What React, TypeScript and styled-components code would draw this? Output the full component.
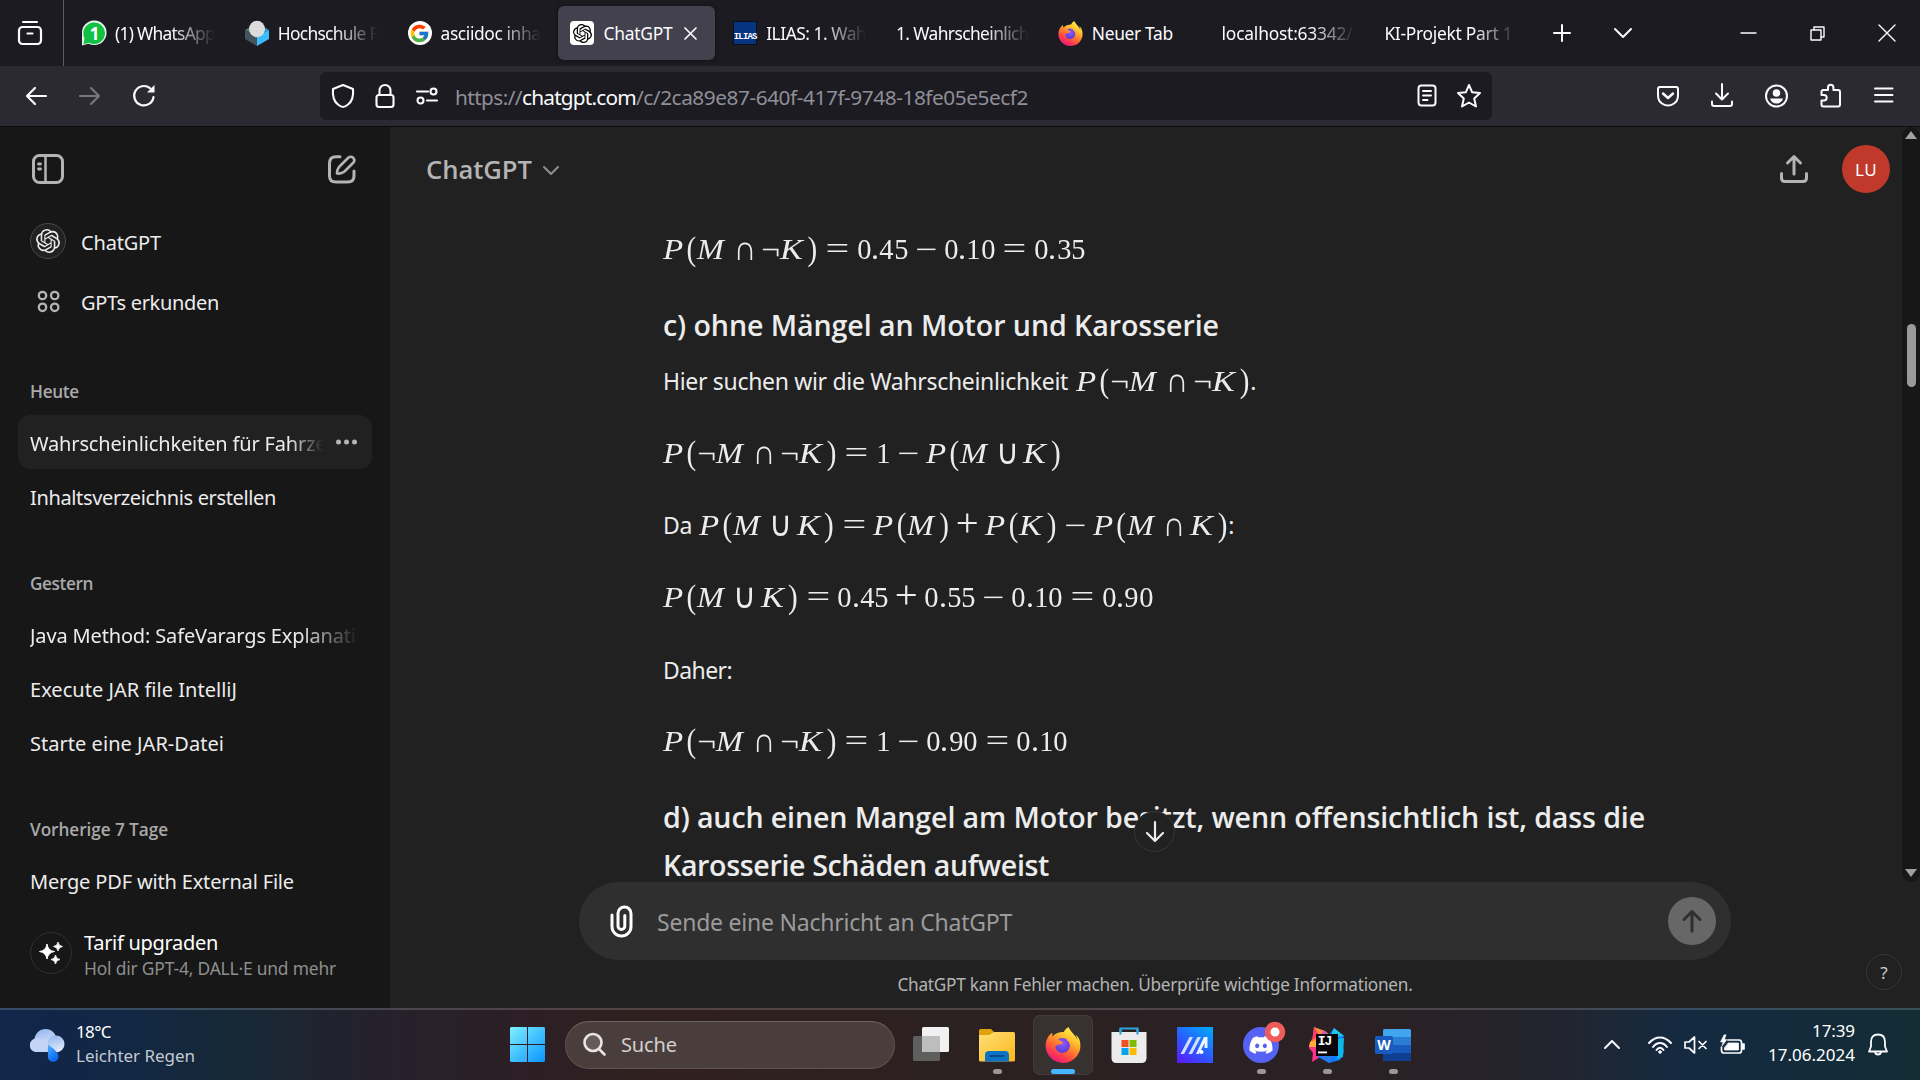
import React, { useLayoutEffect, useRef, useState } from 'react';
import styled, { createGlobalStyle, css } from 'styled-components';
import { SiOpenai, SiDiscord, SiFirefoxbrowser } from 'react-icons/si';
import { FcGoogle } from 'react-icons/fc';

const Global = createGlobalStyle`
  * { box-sizing: border-box; }
  html, body { margin: 0; background: #212121; overflow: hidden; }
  body { font-family: "Noto Sans", "Open Sans", sans-serif; color: #ececec; }
  svg { display: block; flex: none; overflow: visible; }
`;

/* ---------- text with an optional target width ---------- */

const FitText = styled.span`
  white-space: nowrap;
  display: inline-block;
`;

function Fit({ w, children }: { w: number; children: string }) {
  const ref = useRef<HTMLSpanElement>(null);
  const [spacing, setSpacing] = useState(0);
  useLayoutEffect(() => {
    if (ref.current) {
      const natural = ref.current.getBoundingClientRect().width;
      setSpacing((w - natural) / children.length);
    }
  }, [w, children]);
  return (
    <FitText ref={ref} style={{ letterSpacing: spacing }}>
      {children}
    </FitText>
  );
}

/* ---------- window ---------- */

const Screen = styled.div`
  width: 1920px;
  height: 1080px;
  display: flex;
  flex-direction: column;
  overflow: hidden;
`;

const TabBar = styled.div`
  height: 66px;
  flex: none;
  background: #1c1b22;
  display: flex;
  align-items: center;
`;

const TabOverview = styled.div`
  width: 64px;
  height: 66px;
  border-right: 1px solid #5b5b66;
  display: flex;
  align-items: center;
  padding-left: 18px;
  margin-right: 6px;
`;

const Tab = styled.div<{ $active?: boolean }>`
  width: 157px;
  height: 54px;
  margin-right: 5.8px;
  padding: 0 12px;
  display: flex;
  align-items: center;
  gap: 9px;
  border-radius: 6px;
  font-size: 17.4px;
  color: #fbfbfe;
  ${(p) => p.$active && css`
    background: #42414d;
    box-shadow: 0 0 4px rgba(0, 0, 0, 0.5);
  `}
`;

const TabLabel = styled.div<{ $fade?: boolean }>`
  flex: 1;
  min-width: 0;
  overflow: hidden;
  white-space: nowrap;
  line-height: 28px;
  ${(p) => p.$fade && css`
    mask-image: linear-gradient(to left, transparent, #000 44px);
  `}
`;

const Favicon = styled.div<{ $bg?: string }>`
  width: 24px;
  height: 24px;
  flex: none;
  border-radius: ${(p) => (p.$bg === '#fff' ? '4px' : '0')};
  background: ${(p) => p.$bg ?? 'transparent'};
  color: #000;
  display: flex;
  align-items: center;
  justify-content: center;
`;

const RoundFavicon = styled(Favicon)`
  border-radius: 50%;
`;

const IliasIcon = styled(Favicon)`
  border: 1px solid #06101f;
  align-items: flex-end;
  font: bold 9px/13px "Liberation Mono", monospace;
  letter-spacing: -0.8px;
  color: #fff;
`;

const BarIcons = styled.div<{ $left: number; $gap: number }>`
  display: flex;
  align-items: center;
  margin-left: ${(p) => p.$left}px;
  gap: ${(p) => p.$gap}px;
`;

const NavBar = styled.div`
  height: 61px;
  flex: none;
  background: #2b2a33;
  border-bottom: 1px solid #0c0c0d;
  display: flex;
  align-items: center;
  padding-left: 24px;
`;

const UrlBar = styled.div`
  width: 1172px;
  height: 48px;
  margin-left: 164px;
  border-radius: 6px;
  background: #1c1b22;
  display: flex;
  align-items: center;
  padding: 0 11px;
`;

const Url = styled.div`
  margin-left: 16px;
  flex: 1;
  font-size: 20.8px;
  line-height: 30px;
  color: #8f8f98;
  padding-top: 2px;
  b { font-weight: 400; color: #fbfbfe; }
`;

/* ---------- page ---------- */

const Page = styled.div`
  height: 881px;
  flex: none;
  display: flex;
`;

const Sidebar = styled.aside`
  width: 390px;
  flex: none;
  background: #171717;
  padding: 0 18px;
  display: flex;
  flex-direction: column;
`;

const SideHead = styled.div`
  height: 84px;
  display: flex;
  align-items: center;
  justify-content: space-between;
  padding: 0 16px 0 14px;
  color: #b4b4b4;
`;

const SideLink = styled.div`
  height: 60px;
  display: flex;
  align-items: center;
  gap: 15px;
  padding: 2px 12px 0;
  font-size: 20px;
`;

const LinkIcon = styled.div<{ $ring?: boolean }>`
  width: 36px;
  height: 36px;
  margin-bottom: 3px;
  border-radius: 50%;
  display: flex;
  align-items: center;
  justify-content: center;
  color: ${(p) => (p.$ring ? '#ececec' : '#b4b4b4')};
  ${(p) => p.$ring && css`
    background: #212121;
    border: 1.5px solid #4a4a4a;
  `}
`;

const GroupTitle = styled.h3<{ $top: number }>`
  margin: ${(p) => p.$top}px 0 8px;
  padding-left: 12px;
  height: 30px;
  font-size: 17.2px;
  line-height: 30px;
  font-weight: 600;
  font-family: "Open Sans", "Noto Sans", sans-serif;
  color: #a9a9a9;
`;

const Chat = styled.div<{ $active?: boolean }>`
  height: 54px;
  flex: none;
  border-radius: 12px;
  padding: 2px 13px 0 12px;
  display: flex;
  align-items: center;
  justify-content: space-between;
  font-size: 20px;
  background: ${(p) => (p.$active ? '#212121' : 'transparent')};
`;

const ChatTitle = styled.div<{ $width?: number }>`
  overflow: hidden;
  white-space: nowrap;
  ${(p) => p.$width && css`
    width: ${p.$width}px;
    mask-image: linear-gradient(to left, transparent, #000 ${p.$width > 300 ? 60 : 34}px);
  `}
`;

const Upgrade = styled.div`
  display: flex;
  align-items: center;
  gap: 12px;
  height: 60px;
  margin-top: 16px;
  padding-left: 12px;
`;

const UpgradeIcon = styled.div`
  width: 42px;
  height: 42px;
  border: 1px solid #2f2f2f;
  border-radius: 50%;
  display: flex;
  align-items: center;
  justify-content: center;
`;

const UpgradeText = styled.div`
  display: flex;
  flex-direction: column;
  align-items: flex-start;
  font-size: 20px;
  line-height: 27px;
  padding-top: 3px;
  color: #fff;
  small { font-size: 17.4px; line-height: 25px; color: #8e8e8e; }
`;

const Main = styled.main`
  flex: 1;
  background: #212121;
  display: flex;
  flex-direction: column;
  position: relative;
`;

const Scroller = styled.div`
  height: 755px;
  flex: none;
  display: flex;
`;

const Conversation = styled.div`
  flex: 1;
  overflow: hidden;
`;

const ScrollTrack = styled.div`
  width: 18px;
  background: #171717;
  border-radius: 9px;
  display: flex;
  flex-direction: column;
  align-items: center;
  padding: 4px 0 5px;
`;

const Thumb = styled.div`
  width: 9px;
  height: 63px;
  margin-top: 185px;
  margin-bottom: auto;
  border-radius: 5px;
  background: #9a9a9a;
`;

const MainHead = styled.header`
  height: 84px;
  display: flex;
  align-items: center;
  padding: 0 12px 0 36px;
  color: #b4b4b4;
`;

const Model = styled.div`
  display: flex;
  align-items: center;
  gap: 11px;
  margin-right: auto;
  font: 600 25.6px/40px "Open Sans", "Noto Sans", sans-serif;
  padding-top: 2px;
`;

const Avatar = styled.div`
  width: 48px;
  height: 48px;
  border-radius: 50%;
  margin-left: 34px;
  background: #c0392b;
  color: #fff;
  font-size: 17px;
  display: flex;
  align-items: center;
  justify-content: center;
`;

const Answer = styled.article`
  padding-left: 273px;
`;

const Line = styled.div<{ $h: number; $gap?: number }>`
  height: ${(p) => p.$h}px;
  display: flex;
  align-items: center;
  font-size: 23px;
  > :first-child { margin-right: ${(p) => p.$gap ?? 0}px; }
`;

const Heading = styled.h3<{ $h?: number }>`
  margin: 0;
  height: ${(p) => p.$h ?? 96}px;
  display: flex;
  flex-direction: column;
  justify-content: center;
  align-items: flex-start;
  font: 600 28.6px/48px "Open Sans", "Noto Sans", sans-serif;
`;

const Composer = styled.div`
  width: 1152px;
  height: 78px;
  flex: none;
  margin-left: 189px;
  border-radius: 39px;
  background: #2f2f2f;
  display: flex;
  align-items: center;
  padding: 0 15px 0 28px;
`;

const Placeholder = styled.div`
  flex: 1;
  margin-left: 20px;
  font-size: 23px;
  padding-top: 2px;
  color: #9b9b9b;
`;

const SendButton = styled.div`
  width: 48px;
  height: 48px;
  border-radius: 50%;
  background: #676767;
  display: flex;
  align-items: center;
  justify-content: center;
`;

const Disclaimer = styled.div`
  height: 48px;
  width: 1530px;
  padding-top: 1px;
  text-align: center;
  font-size: 17.2px;
  line-height: 48px;
  color: #b4b4b4;
`;

const RoundButton = styled.div<{ $x: number; $y: number; $size: number }>`
  position: absolute;
  left: ${(p) => p.$x}px;
  top: ${(p) => p.$y}px;
  width: ${(p) => p.$size}px;
  height: ${(p) => p.$size}px;
  border-radius: 50%;
  border: 1.5px solid #383838;
  background: #212121;
  display: flex;
  align-items: center;
  justify-content: center;
  font-size: 17px;
  color: #cfcfcf;
`;

/* ---------- formulas ---------- */

const Formula = styled.span`
  display: inline-flex;
  align-items: baseline;
  font: 29.04px/36px "Liberation Serif", serif;
`;

const Glyph = styled.span<{ $w: number; $pad: number; $kind: string; $sx: number; $sy: number }>`
  display: flex;
  justify-content: ${(p) => (p.$kind === 'var' ? 'flex-start' : 'center')};
  width: ${(p) => p.$w}em;
  margin: 0 ${(p) => p.$pad}em;
  font-style: ${(p) => (p.$kind === 'var' ? 'italic' : 'normal')};
  transform-origin: ${(p) => (p.$kind === 'var' ? 'left' : 'center')} 66%;
  transform: scale(${(p) => p.$sx}, ${(p) => p.$sy});
  ${(p) => p.$kind === 'set' && css`
    font-family: "DejaVu Sans", sans-serif;
    font-weight: 200;
  `}
`;

type Metric = [width: number, pad: number, kind: string, scaleX: number, scaleY: number];

const METRICS: Record<string, Metric> = {
  P: [0.781, 0, 'var', 1.14, 1.04],
  M: [1.079, 0, 'var', 1.11, 1.04],
  K: [0.921, 0, 'var', 1.18, 1.04],
  '(': [0.389, 0, 'paren', 1, 1.13],
  ')': [0.389, 0, 'paren', 1, 1.13],
  '¬': [0.667, 0, 'op', 1.15, 1.05],
  '∩': [0.667, 0.222, 'set', 1.08, 1.2],
  '∪': [0.667, 0.222, 'set', 1.08, 1.2],
  '+': [0.778, 0.222, 'op', 1.4, 1.35],
  '−': [0.778, 0.222, 'op', 1.35, 1],
  '=': [0.778, 0.278, 'op', 1.45, 1.1],
  '.': [0.278, 0, 'op', 1.1, 1.1],
};

function MathText({ children }: { children: string }) {
  return (
    <Formula>
      {[...children].map((c, i) => {
        const [w, pad, kind, sx, sy] = METRICS[c] ?? [0.5, 0, 'num', 0.98, 1.03];
        return (
          <Glyph key={i} $w={w} $pad={pad} $kind={kind} $sx={sx} $sy={sy}>
            <span>{c}</span>
          </Glyph>
        );
      })}
    </Formula>
  );
}

/* ---------- taskbar ---------- */

const Taskbar = styled.footer`
  height: 72px;
  flex: none;
  border-top: 2px solid rgba(255, 255, 255, 0.17);
  background: linear-gradient(90deg, #11264a 0, #122743 130px, #162937 230px, #20232f 320px,
    #28202b 420px, #2c1f25 520px, #30201e 680px, #2c211f 850px, #2b2123 1100px, #2a2125 1400px,
    #212530 1570px, #142a40 1680px, #132b3c 1780px, #142c34 1920px) border-box;
  display: flex;
  align-items: center;
`;

const Weather = styled.div`
  display: flex;
  align-items: center;
  gap: 11px;
  padding-left: 28px;
  width: 502px;
`;

const TwoLines = styled.div<{ $right?: boolean }>`
  display: flex;
  flex-direction: column;
  margin-top: -3px;
  align-items: ${(p) => (p.$right ? 'flex-end' : 'flex-start')};
  font-size: 17px;
  line-height: 24px;
  color: #fff;
  span:last-child { color: ${(p) => (p.$right ? '#fff' : '#c3c9d2')}; }
`;

const SearchBox = styled.div`
  width: 330px;
  height: 48px;
  margin: 0 10px 0 12px;
  border-radius: 24px;
  border: 1.5px solid #5f5351;
  border-top-color: #6f6361;
  background: #4a3e3d;
  display: flex;
  align-items: center;
  gap: 15px;
  padding: 0 0 2px 17px;
  font-size: 20px;
  color: #d3cfcd;
`;

const AppSlot = styled.div<{ $active?: boolean }>`
  width: 60px;
  height: 60px;
  margin: 0 3px;
  padding-top: 12px;
  border-radius: 7px;
  display: flex;
  flex-direction: column;
  align-items: center;
  ${(p) => p.$active && css`
    background: #373130;
    box-shadow: inset 0 0 0 1px #413b3a;
  `}
`;

const Indicator = styled.i<{ $wide?: boolean }>`
  display: block;
  width: ${(p) => (p.$wide ? 24 : 9)}px;
  height: 5px;
  margin-top: 6px;
  border-radius: 3px;
  background: ${(p) => (p.$wide ? '#45b6fe' : '#9b9796')};
`;

const StartSlot = styled(AppSlot)`
  margin: 0;
  width: 51px;
`;

const DiscordWrap = styled.div`
  margin: -6px -6px 0 0;
`;

const Tray = styled.div`
  display: flex;
  align-items: center;
  margin-left: 178px;
  padding-bottom: 1px;
  color: #fff;
`;

const TrayItem = styled.div<{ $left: number }>`
  margin-left: ${(p) => p.$left}px;
`;

/* ---------- drawings ---------- */

type StrokeProps = {
  w?: number;
  h?: number;
  s?: number;
  color?: string;
  children: React.ReactNode;
};

const Stroke = ({ w = 24, h = w, s = 2, color = '#fbfbfe', children }: StrokeProps) => (
  <svg width={w} height={h} viewBox={`0 0 ${w} ${h}`} fill="none" stroke={color}
    strokeWidth={s} strokeLinecap="round" strokeLinejoin="round">
    {children}
  </svg>
);

const Firefox = ({ size, id }: { size: number; id: string }) => (
  <svg width={size} height={size} viewBox="0 0 24 24">
    <defs>
      <linearGradient id={`${id}f`} gradientUnits="userSpaceOnUse" x1="20" y1="1" x2="7" y2="24">
        <stop offset="0" stopColor="#fff44f" />
        <stop offset="0.3" stopColor="#ffc22e" />
        <stop offset="0.55" stopColor="#ff7a2e" />
        <stop offset="0.8" stopColor="#ff3750" />
        <stop offset="1" stopColor="#e31587" />
      </linearGradient>
      <radialGradient id={`${id}p`} cx="0.5" cy="0.35" r="0.6">
        <stop offset="0" stopColor="#9059ff" />
        <stop offset="1" stopColor="#5b3fd6" />
      </radialGradient>
    </defs>
    <circle cx="12" cy="13" r="9.6" fill={`url(#${id}f)`} />
    <circle cx="11.6" cy="12.3" r="5" fill={`url(#${id}p)`} />
    <SiFirefoxbrowser size={24} fill={`url(#${id}f)`} />
  </svg>
);

const WhatsApp = () => (
  <svg width="25" height="25" viewBox="0 0 25 25">
    <path d="M0 24.5V12.5A12.3 12.3 0 1 1 12.5 24Q9 24 6.500 22.800Z" fill="#e8f5ea" />
    <path d="M1.500 23.200l1-6A10.800 10.800 0 1 1 7 21.800Z" fill="#12c143" />
    <text x="12.500" y="18.600" textAnchor="middle" fontSize="17" fontWeight="700" fill="#fff"
      fontFamily="Noto Sans, sans-serif">1</text>
  </svg>
);

const Hochschule = () => (
  <svg width="24" height="25" viewBox="0 0 24 25">
    <path d="M0 9L12 15V25L0 18Z" fill="#44545c" />
    <path d="M24 9L12 15V25L24 18Z" fill="#3cbcfc" />
    <path d="M0 9L5 6L12 15Z" fill="#5d7078" />
    <path d="M24 9L19 6L12 15Z" fill="#2a9fe0" />
    <ellipse cx="12" cy="8" rx="8" ry="8.200" fill="#dcdcdc" />
  </svg>
);

const Cloud = () => (
  <svg width="37" height="33" viewBox="0 0 37 33">
    <defs>
      <linearGradient id="cl" x1="0" y1="0" x2="0.3" y2="1">
        <stop offset="0" stopColor="#8fb2ee" />
        <stop offset="1" stopColor="#dfe9fb" />
      </linearGradient>
      <linearGradient id="dr" x1="0" y1="0" x2="0.5" y2="1">
        <stop offset="0" stopColor="#4fb0ff" />
        <stop offset="1" stopColor="#0a66f0" />
      </linearGradient>
    </defs>
    <circle cx="17.500" cy="11" r="11" fill="url(#cl)" />
    <path d="M7 9.500a7 7 0 0 0 0 13.500h13V16Q14 8 7 9.500Z" fill="#c3d5f6" />
    <circle cx="28" cy="15" r="8.500" fill="url(#cl)" />
    <path d="M20 15.500Q31 23 30.500 27.500a5.300 5.300 0 0 1-10.600 0Z" fill="url(#dr)" />
  </svg>
);

const WindowsLogo = () => (
  <svg width="35" height="35" viewBox="0 0 35 35">
    <defs>
      <linearGradient id="win" x1="0" y1="0" x2="35" y2="35" gradientUnits="userSpaceOnUse">
        <stop offset="0" stopColor="#7ef0ff" />
        <stop offset="1" stopColor="#0a94ff" />
      </linearGradient>
    </defs>
    <path d="M1 0H17V17H0V1ZM18 0H34L35 1V17H18ZM0 18H17V35H1L0 34ZM18 18H35V34L34 35H18Z" fill="url(#win)" />
  </svg>
);

const TaskView = () => (
  <svg width="36" height="34" viewBox="0 0 36 34">
    <rect x="9" y="0" width="27" height="25" rx="1.500" fill="#f1f1f1" />
    <rect x="0" y="9" width="27" height="25" rx="1.500" fill="#5e5e5e" />
    <rect x="9" y="9" width="18" height="16" fill="#bdbdbd" />
  </svg>
);

const Explorer = () => (
  <svg width="36" height="36" viewBox="0 0 36 36">
    <defs>
      <linearGradient id="fo" x1="0" y1="0" x2="1" y2="1">
        <stop offset="0" stopColor="#ffdf7a" />
        <stop offset="1" stopColor="#fbb917" />
      </linearGradient>
    </defs>
    <path d="M0 3.500Q0 2 1.500 2H12L15 5L12 9H0Z" fill="#e0a10b" />
    <path d="M0 8H10L15 5H34.500Q36 5 36 6.500V33Q36 34.500 34.500 34.500H1.500Q0 34.500 0 33Z" fill="url(#fo)" />
    <path d="M6 34.500V28Q6 24 10 24H26Q30 24 30 28V34.500Z" fill="#0c72c4" />
    <path d="M11.500 29H24.500" stroke="#0a4a86" strokeWidth="2" strokeLinecap="round" />
  </svg>
);

const Store = () => (
  <svg width="36" height="36" viewBox="0 0 36 36">
    <path d="M9.500 7.500V1.500H26.500V7.500" fill="none" stroke="#2ba4dd" strokeWidth="2.200" />
    <path d="M.5 5H35.500V31Q35.500 36 30.500 36H5.500Q.5 36 .5 31Z" fill="#ececec" />
    <path d="M9.500 7.500V2M26.500 7.500V2" stroke="#2ba4dd" strokeWidth="2.200" />
    <rect x="10.500" y="13" width="7" height="7" fill="#f25022" />
    <rect x="18.500" y="13" width="7" height="7" fill="#7fba00" />
    <rect x="10.500" y="21" width="7" height="7" fill="#00a4ef" />
    <rect x="18.500" y="21" width="7" height="7" fill="#ffb900" />
  </svg>
);

const Armoury = () => (
  <svg width="36" height="36" viewBox="0 0 36 36">
    <defs>
      <linearGradient id="ar" x1="0.1" y1="1" x2="0.8" y2="0">
        <stop offset="0" stopColor="#5a1cff" />
        <stop offset="0.5" stopColor="#2b5dff" />
        <stop offset="1" stopColor="#04a2fb" />
      </linearGradient>
    </defs>
    <rect width="36" height="36" fill="url(#ar)" />
    <path d="M3.500 27L12.500 10H16L7 27ZM11.500 27L20.500 10H24L15 27Z" fill="#cfe0ff" />
    <path d="M19 27L27 10H30.500V21H27.500V16L22 27Z" fill="#eef4ff" />
    <circle cx="24.500" cy="25" r="2" fill="#fff" />
  </svg>
);

const Discord = () => (
  <svg width="42" height="42" viewBox="0 0 42 42">
    <circle cx="18" cy="24" r="18" fill="#5662f3" />
    <svg x="6.500" y="12.500" width="23" height="23" viewBox="0 0 24 24">
      <SiDiscord size={24} color="#fff" />
    </svg>
    <circle cx="32" cy="11" r="10.300" fill="#f05b5b" />
    <circle cx="32" cy="11" r="4.500" fill="#fff" />
  </svg>
);

const IntelliJ = () => (
  <svg width="36" height="36" viewBox="0 0 36 36">
    <path d="M5 0L16 4L22 9L9 20L1 16L4 10Z" fill="#fc8a3c" />
    <path d="M5 0L10 8L3 14Z" fill="#fe3a6c" />
    <path d="M14 3L20 8L12 9Z" fill="#c55ccc" />
    <path d="M1 15L9 14L11 30L3 35L4 26L0 21Z" fill="#ff318c" />
    <path d="M1 15L8 13L7 20L0 20Z" fill="#ffb03a" />
    <path d="M25 1L35 9L33 15L35 25L31 33L20 36L9 30L20 8Z" fill="#087cfa" />
    <path d="M25 1L35 9L29 10L22 8Z" fill="#22c4e8" />
    <path d="M29 12L35 11L34 30L28 32Z" fill="#0fb7e6" />
    <path d="M20 36L11 29H24Z" fill="#2c7be8" />
    <rect x="7" y="7" width="22" height="22" fill="#0a0608" />
    <text x="8.800" y="18" fontSize="13" fontWeight="700" fill="#fff" letterSpacing="-1"
      fontFamily="Liberation Mono, monospace">IJ</text>
    <rect x="9" y="24.500" width="9" height="1.800" fill="#fff" />
  </svg>
);

const Word = () => (
  <svg width="36" height="36" viewBox="0 0 36 36">
    <rect x="8" y="2" width="28" height="32" rx="2" fill="#2b7cd3" />
    <path d="M8 10V4Q8 2 10 2H34Q36 2 36 4V10Z" fill="#41a5ee" />
    <path d="M8 18H36V26H8Z" fill="#185abd" />
    <path d="M8 26H36V32Q36 34 34 34H10Q8 34 8 32Z" fill="#103f91" />
    <rect x="0" y="9" width="18" height="18" rx="1.500" fill="#185abd" />
    <text x="9" y="23" textAnchor="middle" fontSize="14" fontWeight="700" fill="#fff"
      fontFamily="Noto Sans, sans-serif">W</text>
  </svg>
);

const Restore = () => (
  <Stroke w={15} h={15} s={1.4}>
    <rect x="1" y="4" width="10" height="10" />
    <path d="M4 4V1H14V11H11" />
  </Stroke>
);

/* ---------- screen parts ---------- */

function Tabs() {
  return (
    <TabBar>
      <TabOverview>
        <Stroke w={24} h={24} s={2.2}>
          <path d="M5 1H19" />
          <rect x="1" y="6" width="22" height="17" rx="3.500" />
          <path d="M9.500 12.500H14.500" />
        </Stroke>
      </TabOverview>
      <Tab>
        <Favicon><WhatsApp /></Favicon>
        <TabLabel $fade><Fit w={100}>(1) WhatsApp</Fit></TabLabel>
      </Tab>
      <Tab>
        <Favicon><Hochschule /></Favicon>
        <TabLabel $fade><Fit w={100}>Hochschule F</Fit></TabLabel>
      </Tab>
      <Tab>
        <RoundFavicon $bg="#fff"><FcGoogle size={21} /></RoundFavicon>
        <TabLabel $fade><Fit w={100}>asciidoc inha</Fit></TabLabel>
      </Tab>
      <Tab $active>
        <Favicon $bg="#fff"><SiOpenai size={19} /></Favicon>
        <TabLabel><Fit w={69}>ChatGPT</Fit></TabLabel>
        <Stroke w={13} s={1.7}><path d="M1 1L12 12M12 1L1 12" /></Stroke>
        <BarIcons $left={-3} $gap={0} />
      </Tab>
      <Tab>
        <IliasIcon $bg="#07347f">ILIAS</IliasIcon>
        <TabLabel $fade><Fit w={100}>ILIAS: 1. Wah</Fit></TabLabel>
      </Tab>
      <Tab><TabLabel $fade><Fit w={133}>1. Wahrscheinlich</Fit></TabLabel></Tab>
      <Tab>
        <Favicon><Firefox size={25} id="t" /></Favicon>
        <TabLabel><Fit w={81}>Neuer Tab</Fit></TabLabel>
      </Tab>
      <Tab><TabLabel $fade><Fit w={131}>localhost:63342/</Fit></TabLabel></Tab>
      <Tab><TabLabel $fade><Fit w={128}>KI-Projekt Part 1</Fit></TabLabel></Tab>
      <BarIcons $left={18} $gap={43}>
        <Stroke w={18} s={2}><path d="M9 1V17M1 9H17" /></Stroke>
        <Stroke w={18} h={10} s={2}><path d="M1 1L9 9L17 1" /></Stroke>
      </BarIcons>
      <BarIcons $left={109} $gap={54}>
        <Stroke w={15} h={2} s={1.4}><path d="M0 1H15" /></Stroke>
        <Restore />
        <Stroke w={16} s={1.4}><path d="M0 0L16 16M16 0L0 16" /></Stroke>
      </BarIcons>
    </TabBar>
  );
}

function Navigation() {
  return (
    <NavBar>
      <BarIcons $left={0} $gap={30}>
        <Stroke s={2.2}><path d="M22 12H3M11 4L3 12L11 20" /></Stroke>
        <Stroke s={2.2} color="#77767e"><path d="M2 12H21M13 4L21 12L13 20" /></Stroke>
        <Stroke s={2.2}>
          <path d="M21.500 13A9.700 9.700 0 1 1 18 4.200" />
          <path d="M22.500 1V8.500H15Z" fill="#fbfbfe" stroke="none" />
        </Stroke>
      </BarIcons>
      <UrlBar>
        <BarIcons $left={0} $gap={18}>
          <Stroke s={2.1}>
            <path d="M12 1L22 5Q23 16 17 20.500Q14 23 12 23Q10 23 7 20.500Q1 16 2 5Z" />
          </Stroke>
          <Stroke s={2.1}>
            <rect x="3.500" y="11" width="17" height="12" rx="2.500" />
            <path d="M6.500 11V6.500a5.500 5.500 0 0 1 11 0V11" />
          </Stroke>
          <Stroke s={2.1}>
            <path d="M2 7.500H13M12 16.500H22" />
            <circle cx="18.500" cy="7.500" r="3" />
            <circle cx="5.500" cy="16.500" r="3" />
          </Stroke>
        </BarIcons>
        <Url>
          <Fit w={67}>https://</Fit>
          <b><Fit w={114}>chatgpt.com</Fit></b>
          <Fit w={392}>/c/2ca89e87-640f-417f-9748-18fe05e5ecf2</Fit>
        </Url>
        <BarIcons $left={0} $gap={18}>
          <Stroke s={2}>
            <rect x="3.500" y="1.500" width="17" height="20" rx="3" />
            <path d="M8 7H16M8 11.500H16M8 16H12.500" />
          </Stroke>
          <Stroke s={2}>
            <path d="M12 1L15.200 8.300L23 9L17.200 14.500L19 22.500L12 18.500L5 22.500L6.800 14.500L1 9L8.800 8.300Z" />
          </Stroke>
        </BarIcons>
      </UrlBar>
      <BarIcons $left={164} $gap={30}>
        <Stroke s={2}>
          <path d="M4 3H20Q22 3 22 5V11Q22 17 18 19.500Q15 21.500 12 21.500Q9 21.500 6 19.500Q2 17 2 11V5Q2 3 4 3Z" />
          <path d="M7 9.500L12 14L17 9.500" strokeWidth="2.400" />
        </Stroke>
        <Stroke s={2}>
          <path d="M12 0V15M6 9.500L12 15.500L18 9.500M2 17.500V20Q2 22 4 22H20Q22 22 22 20V17.500" />
        </Stroke>
        <Stroke s={2}>
          <circle cx="12.500" cy="12" r="10.500" />
          <circle cx="12.500" cy="9" r="3.800" fill="#fbfbfe" stroke="none" />
          <path d="M6 14.500H19Q17.500 19.500 12.500 19.500T6 14.500Z" fill="#fbfbfe" stroke="none" />
        </Stroke>
        <Stroke s={2}>
          <path d="M5.500 6H10V3.500a2.700 2.700 0 0 1 5.400 0V6H20Q22 6 22 8V20.500Q22 22.500 20 22.500H5.500Q3.500 22.500 3.500 20.500V16.500H6a2.700 2.700 0 0 0 0-5.400H3.500V8Q3.500 6 5.500 6Z" />
        </Stroke>
        <Stroke s={2}><path d="M3 4.500H20.500M3 11H20.500M3 17.500H20.500" /></Stroke>
      </BarIcons>
    </NavBar>
  );
}

function History() {
  return (
    <Sidebar>
      <SideHead>
        <Stroke w={32} h={32} s={3} color="#b4b4b4">
          <rect x="1.500" y="2.500" width="29" height="27" rx="6" />
          <path d="M13.500 3.500V28.500" strokeWidth="2.500" />
          <path d="M6.500 11H8.500M6.500 16H8.500" strokeWidth="2.800" />
        </Stroke>
        <Stroke w={28} h={30} s={3} color="#b4b4b4">
          <path d="M12 2.800H8Q1.500 2.800 1.500 9.500V22Q1.500 28 8 28H19.500Q26 28 26 22V17" />
          <path d="M9 19.500Q8.800 15.500 11.500 12.500L20.500 3.500Q23 1.800 25.300 3.800Q27.300 6 25.500 8.500L16.500 17.500Q13.500 20 9 19.500Z" strokeWidth="2.600" />
        </Stroke>
      </SideHead>
      <SideLink>
        <LinkIcon $ring><SiOpenai size={24} /></LinkIcon>
        <Fit w={80}>ChatGPT</Fit>
      </SideLink>
      <SideLink>
        <LinkIcon>
          <Stroke w={24} s={2.3} color="#b4b4b4">
            <circle cx="6.500" cy="6.500" r="3.700" />
            <circle cx="18.700" cy="6.500" r="3.700" />
            <circle cx="6.500" cy="18.300" r="3.700" />
            <circle cx="18.700" cy="18.300" r="3.700" />
          </Stroke>
        </LinkIcon>
        <Fit w={138}>GPTs erkunden</Fit>
      </SideLink>
      <GroupTitle $top={46}><Fit w={49}>Heute</Fit></GroupTitle>
      <Chat $active>
        <ChatTitle $width={293}><Fit w={332}>Wahrscheinlichkeiten für Fahrzeuge</Fit></ChatTitle>
        <Stroke w={24} s={0} color="#b4b4b4">
          <g fill="#b4b4b4">
            <circle cx="3.500" cy="11" r="2.500" />
            <circle cx="11.500" cy="11" r="2.500" />
            <circle cx="19.500" cy="11" r="2.500" />
          </g>
        </Stroke>
      </Chat>
      <Chat><Fit w={246}>Inhaltsverzeichnis erstellen</Fit></Chat>
      <GroupTitle $top={46}><Fit w={63}>Gestern</Fit></GroupTitle>
      <Chat><ChatTitle $width={330}><Fit w={350}>Java Method: SafeVarargs Explanation</Fit></ChatTitle></Chat>
      <Chat><Fit w={207}>Execute JAR file IntelliJ</Fit></Chat>
      <Chat><Fit w={194}>Starte eine JAR-Datei</Fit></Chat>
      <GroupTitle $top={46}><Fit w={138}>Vorherige 7 Tage</Fit></GroupTitle>
      <Chat><Fit w={264}>Merge PDF with External File</Fit></Chat>
      <Upgrade>
        <UpgradeIcon>
          <svg width="24" height="24" viewBox="0 0 24 24" fill="#fff">
            <path d="M8 3Q9 10 15.500 10.500Q9 11.500 8 18Q7 11.500 .500 10.500Q7 10 8 3Z" stroke="#fff" />
            <path d="M19 1Q19.500 5 23.500 5.500Q19.500 6 19 10Q18.500 6 14.500 5.500Q18.500 5 19 1Z" stroke="#fff" strokeWidth=".8" />
            <path d="M16.500 14Q17 18 21 18.500Q17 19 16.500 23Q16 19 12 18.500Q16 18 16.500 14Z" stroke="#fff" strokeWidth=".8" />
          </svg>
        </UpgradeIcon>
        <UpgradeText>
          <Fit w={134}>Tarif upgraden</Fit>
          <small><Fit w={252}>Hol dir GPT-4, DALL·E und mehr</Fit></small>
        </UpgradeText>
      </Upgrade>
    </Sidebar>
  );
}

function ChatArea() {
  return (
    <Main>
      <Scroller>
        <Conversation>
          <MainHead>
            <Model>
              <Fit w={106}>ChatGPT</Fit>
              <Stroke w={16} h={9} s={2} color="#8f8f8f"><path d="M1 1L8 8L15 1" /></Stroke>
            </Model>
            <Stroke w={28} h={30} s={3} color="#b4b4b4">
              <path d="M14 20V2.500M7.500 9L14 2.500L20.500 9" />
              <path d="M1.500 19.500V24Q1.500 27.500 5 27.500H23Q26.500 27.500 26.500 24V19.500" />
            </Stroke>
            <Avatar><Fit w={22}>LU</Fit></Avatar>
          </MainHead>
          <Answer>
            <Line $h={76}><MathText>P(M∩¬K)=0.45−0.10=0.35</MathText></Line>
            <Heading $h={76}><Fit w={556}>c) ohne Mängel an Motor und Karosserie</Fit></Heading>
            <Line $h={36} $gap={8}>
              <Fit w={405}>Hier suchen wir die Wahrscheinlichkeit</Fit>
              <MathText>P(¬M∩¬K)</MathText>.
            </Line>
            <Line $h={108}><MathText>P(¬M∩¬K)=1−P(M∪K)</MathText></Line>
            <Line $h={36} $gap={7}>
              <Fit w={29}>Da</Fit>
              <MathText>P(M∪K)=P(M)+P(K)−P(M∩K)</MathText>:
            </Line>
            <Line $h={108}><MathText>P(M∪K)=0.45+0.55−0.10=0.90</MathText></Line>
            <Line $h={37}><Fit w={69}>Daher:</Fit></Line>
            <Line $h={105}><MathText>P(¬M∩¬K)=1−0.90=0.10</MathText></Line>
            <Heading>
              <Fit w={982}>d) auch einen Mangel am Motor besitzt, wenn offensichtlich ist, dass die</Fit>
              <Fit w={386}>Karosserie Schäden aufweist</Fit>
            </Heading>
          </Answer>
        </Conversation>
        <ScrollTrack>
          <svg width="12" height="8"><path d="M6 0L12 8H0Z" fill="#a0a0a0" /></svg>
          <Thumb />
          <svg width="12" height="8"><path d="M0 0H12L6 8Z" fill="#a0a0a0" /></svg>
        </ScrollTrack>
      </Scroller>
      <Composer>
        <Stroke w={30} h={34} s={3} color="#fff">
          <path d="M5 11V22.500a9.500 9.500 0 0 0 19 0V9.500a6.500 6.500 0 0 0-13 0V22a3.400 3.400 0 0 0 6.800 0V11.500" />
        </Stroke>
        <Placeholder><Fit w={355}>Sende eine Nachricht an ChatGPT</Fit></Placeholder>
        <SendButton>
          <Stroke w={22} h={24} s={3} color="#2f2f2f"><path d="M11 22V2.500M3 10.500L11 2.500L19 10.500" /></Stroke>
        </SendButton>
      </Composer>
      <Disclaimer><Fit w={515}>ChatGPT kann Fehler machen. Überprüfe wichtige Informationen.</Fit></Disclaimer>
      <RoundButton $x={744} $y={684} $size={41}>
        <Stroke w={20} h={22} s={2.2} color="#ececec"><path d="M10 1V20M2 12L10 20L18 12" /></Stroke>
      </RoundButton>
      <RoundButton $x={1476} $y={827} $size={36}>?</RoundButton>
    </Main>
  );
}

function WindowsTaskbar() {
  return (
    <Taskbar>
      <Weather>
        <Cloud />
        <TwoLines><Fit w={35}>18°C</Fit><Fit w={119}>Leichter Regen</Fit></TwoLines>
      </Weather>
      <StartSlot><WindowsLogo /></StartSlot>
      <SearchBox>
        <Stroke w={23} h={23} s={2.6} color="#e8e6e5">
          <circle cx="10" cy="9.500" r="8.500" fill="#665b5a" />
          <path d="M16 16L21.500 21.500" />
        </Stroke>
        <Fit w={56}>Suche</Fit>
      </SearchBox>
      <BarIcons $left={-7} $gap={0}>
        <AppSlot><TaskView /></AppSlot>
        <AppSlot><Explorer /><Indicator /></AppSlot>
        <AppSlot $active><Firefox size={36} id="b" /><Indicator $wide /></AppSlot>
        <AppSlot><Store /></AppSlot>
        <AppSlot><Armoury /></AppSlot>
        <AppSlot><DiscordWrap><Discord /></DiscordWrap><Indicator /></AppSlot>
        <AppSlot><IntelliJ /><Indicator /></AppSlot>
        <AppSlot><Word /><Indicator /></AppSlot>
      </BarIcons>
      <Tray>
        <Stroke w={16} h={9} s={2}><path d="M1 8L8 1L15 8" /></Stroke>
        <TrayItem $left={28}>
          <Stroke w={24} h={18} s={2}>
            <path d="M1 7Q6 1.500 12 1.500T23 7M5 11Q8 7 12 7T19 11M8.500 14Q10 11.800 12 11.800T15.500 14" />
            <circle cx="12" cy="16" r="1.300" fill="#fff" strokeWidth="1" />
          </Stroke>
        </TrayItem>
        <TrayItem $left={12}>
          <Stroke w={24} h={18} s={1.7}>
            <path d="M1 6H5L10.500 1V17L5 12H1ZM15 5.500L22 12.500M22 5.500L15 12.500" />
          </Stroke>
        </TrayItem>
        <TrayItem $left={12}>
          <Stroke w={25} h={20} s={1.7}>
            <path d="M8 5H19Q21.500 5 21.500 7.500V15.500Q21.500 18 19 18H4Q1.500 18 1.500 15.500V12" />
            <path d="M8.500 8H18.500V15H4.500V13Z" fill="#fff" strokeWidth=".8" />
            <path d="M22.500 9H24V14H22.500Z" fill="#fff" />
            <path d="M4 0L0.500 7H3L2 11L7 4.500H4.500L6 0Z" fill="#fff" strokeWidth=".5" />
          </Stroke>
        </TrayItem>
        <TrayItem $left={23}>
          <TwoLines $right><Fit w={43}>17:39</Fit><Fit w={87}>17.06.2024</Fit></TwoLines>
        </TrayItem>
        <TrayItem $left={13}>
          <Stroke w={20} h={23} s={1.8}>
            <path d="M10 1.500Q3 1.500 3 9V13.500L1 18.500H19L17 13.500V9Q17 1.500 10 1.500Z" />
            <path d="M7 19Q7.500 21.500 10 21.500T13 19" />
          </Stroke>
        </TrayItem>
      </Tray>
    </Taskbar>
  );
}

export default function App() {
  return (
    <Screen>
      <Global />
      <Tabs />
      <Navigation />
      <Page>
        <History />
        <ChatArea />
      </Page>
      <WindowsTaskbar />
    </Screen>
  );
}
